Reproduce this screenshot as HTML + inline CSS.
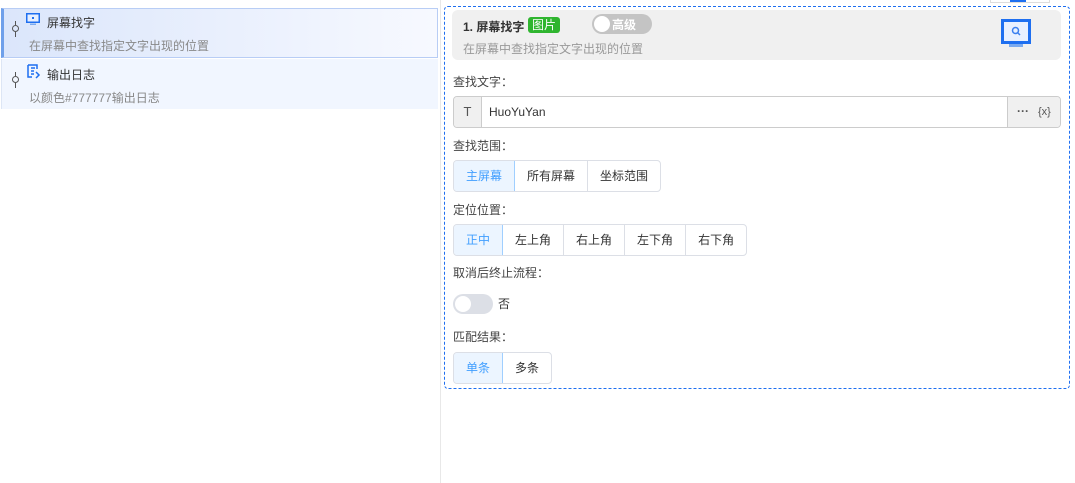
<!DOCTYPE html>
<html><head><meta charset="utf-8"><style>
*{box-sizing:border-box;margin:0;padding:0}
body{width:1075px;height:483px;background:#fff;font-family:"Liberation Sans","Noto Sans CJK SC",sans-serif;font-size:12px;color:#333;position:relative;overflow:hidden}
.a{position:absolute}
.item{position:absolute;left:1px;width:437px;height:50px}
.t{position:absolute;top:5px;font-size:12px;color:#333}
.d{position:absolute;top:28px;font-size:12px;color:#888}
.pin{position:absolute;left:10px;top:16px;width:7px;height:7px;border:1px solid #555;border-radius:50%}
.pin:before{content:"";position:absolute;left:2px;top:-5px;width:1px;height:4px;background:#555}
.pin:after{content:"";position:absolute;left:2px;top:6px;width:1px;height:5px;background:#555}
.lab{position:absolute;left:453px;font-size:12px;color:#444}
.seg{position:absolute;left:453px;display:flex;border:1px solid #dcdfe6;border-radius:4px;height:32px;overflow:hidden}
.seg div{padding:0 12px;line-height:30px;border-left:1px solid #dcdfe6;color:#333;font-size:12px}
.seg div:first-child{border-left:none;background:#ecf5ff;color:#409eff;border-right:1px solid #a0cfff;margin-right:-1px;position:relative}
</style></head><body>
<div class="a" style="left:440px;top:0;width:1px;height:483px;background:#e8e8e8"></div>
<div class="a" style="left:1010px;top:0;width:16px;height:3px;background:#1e6ff0"></div>
<div class="a" style="left:990px;top:0;width:60px;height:3px;border:1px solid #ddd;border-top:none"></div>

<div class="item" style="top:8px;background:linear-gradient(90deg,#dbe6fb,#f7f9ff);border:1px solid #b8cdf5;border-left:3px solid #6fa0ea">
 <div class="pin" style="left:8px"></div>
 <svg class="a" style="left:22px;top:4px" width="14" height="12"><rect x="0.75" y="0.75" width="12.5" height="8.5" fill="#e6efff" stroke="#1e6ff0" stroke-width="1.5"/><rect x="4" y="10.5" width="6" height="1.5" fill="#7aaaf0"/><rect x="6" y="4" width="2" height="2" fill="#1e6ff0"/></svg>
 <div class="t" style="left:43px">屏幕找字</div><div class="d" style="left:25px">在屏幕中查找指定文字出现的位置</div>
</div>
<div class="item" style="top:59px;background:#f1f6ff;border-left:1px solid #dde6f5">
 <div class="pin" style="left:10px;top:17px"></div>
 <svg class="a" style="left:25px;top:5px" width="15" height="15"><path d="M1 1h9v4M1 1v12h4M4 4h4M4 7h3M4 10h3M9 8l3 3-3 3" fill="none" stroke="#1e6ff0" stroke-width="1.5"/></svg>
 <div class="t" style="left:45px;top:7px">输出日志</div><div class="d" style="left:27px;top:30px">以颜色#777777输出日志</div>
</div>

<div class="a" style="left:444px;top:6px;width:626px;height:383px;border:1px dashed #1e6ff0;border-radius:4px"></div>
<div class="a" style="left:452px;top:10px;width:609px;height:50px;background:#f0f0f0;border-radius:6px"></div>
<div class="a" style="left:463px;top:18px;font-weight:bold;color:#333">1. 屏幕找字</div>
<div class="a" style="left:528px;top:17px;background:#2fb52f;color:#fff;padding:0 4px;line-height:16px;border-radius:3px">图片</div>
<div class="a" style="left:592px;top:14px;width:60px;height:20px;background:#c4c4c4;border-radius:10px"><div class="a" style="left:2px;top:2px;width:16px;height:16px;background:#fff;border-radius:50%"></div><div class="a" style="left:20px;top:2px;color:#fff;font-weight:bold">高级</div></div>
<div class="a" style="left:463px;top:40px;color:#999">在屏幕中查找指定文字出现的位置</div>
<svg class="a" style="left:1001px;top:19px" width="30" height="29"><rect x="1.5" y="1.5" width="27" height="22" fill="#e8f0ff" stroke="#1e6ff0" stroke-width="3"/><rect x="8" y="25" width="14" height="3" fill="#7aaaf0"/><circle cx="14.5" cy="11.5" r="3" fill="none" stroke="#3a7ff0" stroke-width="1.5"/><path d="M16.5 13.5l2.5 2.5" stroke="#3a7ff0" stroke-width="1.5"/></svg>

<div class="lab" style="top:73px">查找文字：</div>
<div class="a" style="left:453px;top:96px;width:608px;height:32px;border:1px solid #ccc;border-radius:4px;overflow:hidden">
 <div class="a" style="left:0;top:0;width:28px;height:30px;background:#f0f0f0;border-right:1px solid #ccc;text-align:center;line-height:30px;color:#555;font-size:13px">T</div>
 <div class="a" style="left:35px;top:8px;color:#333">HuoYuYan</div>
 <div class="a" style="left:553px;top:0;width:54px;height:30px;background:#f0f0f0;border-left:1px solid #ccc;line-height:28px;color:#555"><span style="margin-left:9px;font-weight:bold">···</span><span style="margin-left:9px;font-size:11px">{x}</span></div>
</div>

<div class="lab" style="top:137px">查找范围：</div>
<div class="seg" style="top:160px;border-color:#dcdfe6"><div>主屏幕</div><div>所有屏幕</div><div>坐标范围</div></div>
<div class="lab" style="top:201px">定位位置：</div>
<div class="seg" style="top:224px"><div>正中</div><div>左上角</div><div>右上角</div><div>左下角</div><div>右下角</div></div>
<div class="lab" style="top:264px">取消后终止流程：</div>
<div class="a" style="left:453px;top:294px;width:40px;height:20px;background:#dcdfe6;border-radius:10px"><div class="a" style="left:2px;top:2px;width:16px;height:16px;background:#fff;border-radius:50%"></div></div>
<div class="a" style="left:498px;top:295px">否</div>
<div class="lab" style="top:328px">匹配结果：</div>
<div class="seg" style="top:352px"><div>单条</div><div>多条</div></div>
</body></html>
